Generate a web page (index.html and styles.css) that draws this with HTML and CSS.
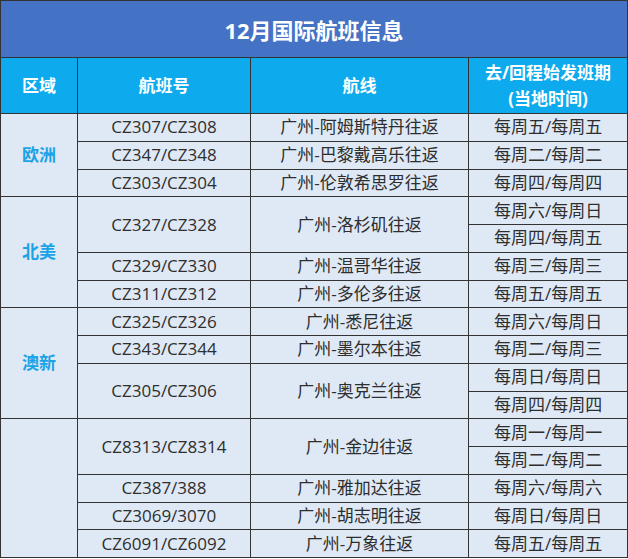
FILE: index.html
```html
<!DOCTYPE html>
<html lang="zh-CN">
<head>
<meta charset="utf-8">
<title>12月国际航班信息</title>
<link rel="stylesheet" href="styles.css">
</head>
<body>
<table class="flights">
  <colgroup>
    <col class="c-region">
    <col class="c-no">
    <col class="c-route">
    <col class="c-date">
  </colgroup>
  <thead>
    <tr class="title-row"><th colspan="4" class="title">12月国际航班信息</th></tr>
    <tr class="head-row">
      <th>区域</th>
      <th>航班号</th>
      <th>航线</th>
      <th>去/回程始发班期<br>(当地时间)</th>
    </tr>
  </thead>
  <tbody>
    <tr><td rowspan="3" class="region">欧洲</td><td>CZ307/CZ308</td><td>广州-阿姆斯特丹往返</td><td>每周五/每周五</td></tr>
    <tr><td>CZ347/CZ348</td><td>广州-巴黎戴高乐往返</td><td>每周二/每周二</td></tr>
    <tr><td>CZ303/CZ304</td><td>广州-伦敦希思罗往返</td><td>每周四/每周四</td></tr>

    <tr><td rowspan="4" class="region">北美</td><td rowspan="2">CZ327/CZ328</td><td rowspan="2">广州-洛杉矶往返</td><td>每周六/每周日</td></tr>
    <tr><td>每周四/每周五</td></tr>
    <tr><td>CZ329/CZ330</td><td>广州-温哥华往返</td><td>每周三/每周三</td></tr>
    <tr><td>CZ311/CZ312</td><td>广州-多伦多往返</td><td>每周五/每周五</td></tr>

    <tr><td rowspan="4" class="region">澳新</td><td>CZ325/CZ326</td><td>广州-悉尼往返</td><td>每周六/每周日</td></tr>
    <tr><td>CZ343/CZ344</td><td>广州-墨尔本往返</td><td>每周二/每周三</td></tr>
    <tr><td rowspan="2">CZ305/CZ306</td><td rowspan="2">广州-奥克兰往返</td><td>每周日/每周日</td></tr>
    <tr><td>每周四/每周四</td></tr>

    <tr><td rowspan="5" class="region"></td><td rowspan="2">CZ8313/CZ8314</td><td rowspan="2">广州-金边往返</td><td>每周一/每周一</td></tr>
    <tr><td>每周二/每周二</td></tr>
    <tr><td>CZ387/388</td><td>广州-雅加达往返</td><td>每周六/每周六</td></tr>
    <tr><td>CZ3069/3070</td><td>广州-胡志明往返</td><td>每周日/每周日</td></tr>
    <tr><td>CZ6091/CZ6092</td><td>广州-万象往返</td><td>每周五/每周五</td></tr>
  </tbody>
</table>
</body>
</html>
```

FILE: styles.css
```css
html, body {
  margin: 0;
  padding: 0;
  overflow: hidden;
  background: #ffffff;
}

.flights {
  border-collapse: collapse;
  table-layout: fixed;
  width: 627px;
  font-family: "Open Sans", "Noto Sans CJK SC", sans-serif;
  font-size: 17px;
  color: #2e2e2e;
  border: 1px solid #2a2a2a;
}

.c-region { width: 77px; }
.c-no { width: 173px; }
.c-route { width: 218px; }
.c-date { width: 159px; }

.flights th,
.flights td {
  border: 1px solid #333333;
  text-align: center;
  vertical-align: middle;
  padding: 0;
  white-space: nowrap;
}

.title-row { height: 57px; }

.title {
  background: #4472c4;
  color: #ffffff;
  font-size: 22px;
  font-weight: 700;
}

.head-row { height: 56px; }

.head-row th {
  background: #0eaaee;
  color: #ffffff;
  font-size: 17px;
  font-weight: 700;
  line-height: 26px;
}

.flights tbody tr { height: 27.75px; }

.flights td {
  background: #dfe9f5;
  line-height: 20px;
}

.flights td.region {
  color: #1aa3e6;
  font-weight: 700;
}
```
